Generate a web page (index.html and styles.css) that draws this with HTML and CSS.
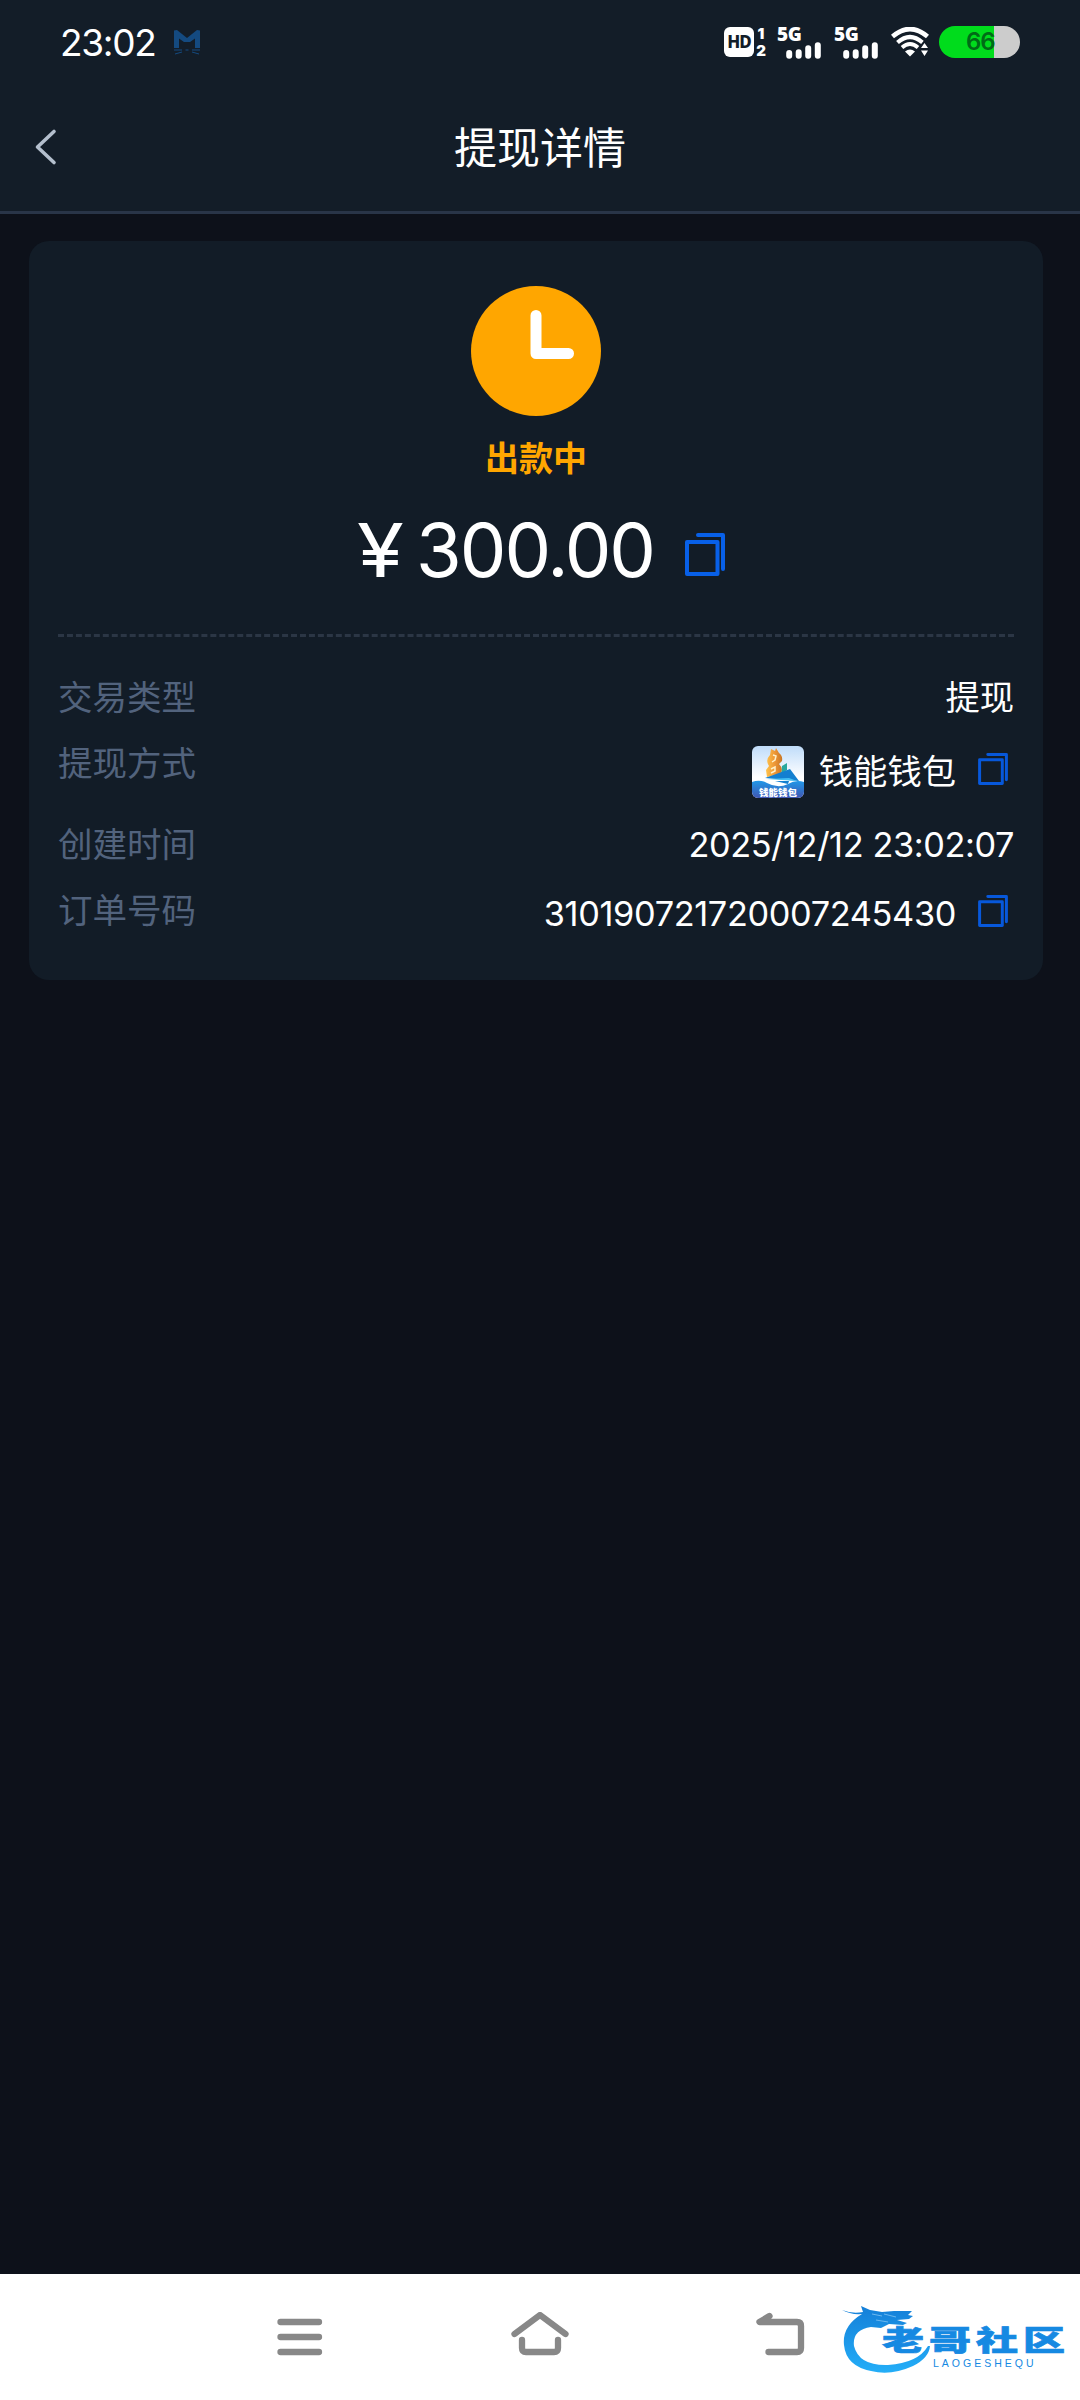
FILE: index.html
```html
<!DOCTYPE html>
<html lang="zh-CN">
<head>
<meta charset="utf-8">
<title>提现详情</title>
<link rel="stylesheet" href="styles.css">
</head>
<body>
<svg width="0" height="0" class="defs">
  <symbol id="copy" viewBox="0 0 40 43">
    <path d="M2 9h30.500v32H2zM13 2h25v34" fill="none" stroke="currentColor" stroke-width="4" stroke-linecap="round" stroke-linejoin="round"/>
  </symbol>
  <symbol id="bars" viewBox="0 0 36 17">
    <path d="M3.200 11v2.800M12.700 10.200v3.600M22.200 6.200v7.600M31.800 3.200v10.600" fill="none" stroke="#fff" stroke-width="6" stroke-linecap="round"/>
  </symbol>
</svg>
<header class="top">
  <div class="status">
    <span class="time">23:02</span>
    <svg class="app-mark" viewBox="0 0 28 27" fill="none">
      <path d="M1 19V1.500L4 1l10 8L24 1l3 .500V19h-5V9.500L17 13h-6L6 9.500V19z" fill="#144a80"/>
      <path d="M1 21h8M2 25l7-2M19 21h8M19 23l7 2M12.500 21h3" stroke="#144a80" stroke-width="1"/>
    </svg>
    <div class="system">
      <span class="hd">HD</span>
      <span class="sims"><b>1</b><b>2</b></span>
      <span class="signal"><b>5G</b><svg viewBox="0 0 36 17"><use href="#bars"/></svg></span>
      <span class="signal"><b>5G</b><svg viewBox="0 0 36 17"><use href="#bars"/></svg></span>
      <svg class="wifi" viewBox="0 0 38 30" fill="none">
        <path d="M1.500 9.500Q19-5.500 36.500 9.500" stroke="#fff" stroke-width="4.600"/>
        <path d="M6.500 15.500Q19 4.500 31.500 15.500" stroke="#fff" stroke-width="4.200"/>
        <path d="M11 20.500Q19 13.500 27 20.500" stroke="#fff" stroke-width="3.800"/>
        <path d="M14 24.500Q19 20.500 24 24.500L19 29.500z" fill="#fff"/>
        <path d="M33.500 13l5.500 8.500-5.500 8.500-6-8.500z" fill="#131d28"/>
        <path d="M33.500 16l3.500 5h-7zM33.500 29l3.500-5.500h-7z" fill="#fff"/>
      </svg>
      <span class="battery">66</span>
    </div>
  </div>
  <div class="titlebar">
    <svg class="back" viewBox="0 0 24 38"><path d="M20 3.500 3.500 19 20 34.500" fill="none" stroke="#b4bfcd" stroke-width="3.600" stroke-linecap="round" stroke-linejoin="round"/></svg>
    <h1>提现详情</h1>
  </div>
</header>
<main>
  <section class="card">
    <svg class="clock" viewBox="0 0 130 130"><circle cx="65" cy="65" r="65" fill="#ffa600"/><path d="M65 29.500V67.500H97.500" fill="none" stroke="#fff" stroke-width="11" stroke-linecap="round" stroke-linejoin="round"/></svg>
    <p class="state">出款中</p>
    <div class="amount"><span class="yen">¥</span><span class="sum">300.00</span><svg class="copy-large"><use href="#copy"/></svg></div>
    <dl class="details">
      <div class="row"><dt>交易类型</dt><dd>提现</dd></div>
      <div class="row method"><dt>提现方式</dt><dd>
        <svg class="wallet" viewBox="0 0 52 52">
          <defs><linearGradient id="sky" x2="0" y2="1"><stop stop-color="#bfdcfa"/><stop offset=".6" stop-color="#fff"/></linearGradient>
          <linearGradient id="sea" x2="0" y2="1"><stop stop-color="#2198e8"/><stop offset="1" stop-color="#4057b3"/></linearGradient>
          <linearGradient id="gold"><stop stop-color="#ffc34b"/><stop offset=".55" stop-color="#ed9636"/><stop offset="1" stop-color="#c87625"/></linearGradient>
          <clipPath id="tile"><rect width="52" height="52" rx="6"/></clipPath></defs>
          <g clip-path="url(#tile)">
            <rect width="52" height="52" fill="url(#sky)"/>
            <path d="M30 20l5-3v7l-6 4z" fill="#28a89e"/>
            <path d="M19 3l4 2 1-3 3 5q4 3 3 8l-3 3q5 5 1 10L15 31l-1-7 3-4q-4-6 1-11z" fill="url(#gold)"/>
            <path d="M21 9l3 1-1 4-3 2M19 23l4-2v4l-4 2" fill="none" stroke="#fff0c8" stroke-width="1.500"/>
            <path d="M13 32 38 23l9 12z" fill="#137fd0"/><path d="M15 33l22-1 8 3z" fill="#43bff2"/>
            <path d="M0 36q8-3 15 1 11 6 21 1 8-5 16-2v16H0z" fill="url(#sea)"/>
            <path d="M23 35h14l-1 3z" fill="#137fd0"/>
            <text x="26" y="49.500" text-anchor="middle" class="wallet-name">钱能钱包</text>
          </g>
        </svg>
        <span>钱能钱包</span><svg class="copy"><use href="#copy"/></svg></dd></div>
      <div class="row"><dt>创建时间</dt><dd class="date">2025/12/12 23:02:07</dd></div>
      <div class="row order"><dt>订单号码</dt><dd><span class="number">310190721720007245430</span><svg class="copy"><use href="#copy"/></svg></dd></div>
    </dl>
  </section>
</main>
<footer class="nav">
  <svg viewBox="0 0 60 50"><path d="M10.500 10h38.500M10.500 25h38.500M10.500 40h38.500"/></svg>
  <svg viewBox="0 0 60 50"><path d="M4.500 22 30 3l25.500 19M12 28v8q0 4 4 4h28q4 0 4-4v-8"/></svg>
  <svg viewBox="0 0 60 50"><path d="M19.500 4 9.500 10H47q4 0 4 4v22q0 4-4 4H18.500"/></svg>
  <div class="brand">
    <svg viewBox="0 0 90 78">
      <defs><linearGradient id="blue" x2="0" y2="1"><stop stop-color="#147fd8"/><stop offset="1" stop-color="#24aef8"/></linearGradient></defs>
      <path d="M0 14q10 4 21 2l-2-6 9 4 12 2 12-1 18 0-4 4 5 1-4 3-12 1 10 3-4 2-14-1-8 4-10-1Q10 34 12 50q5 20 34 19 30-2 40-19l2 0q-1 12-17 20-22 10-42 5Q4 70 2 49 0 30 20 18 9 19 0 14z" fill="url(#blue)"/>
      <path d="M30 18l10 2M42 18l12 3M34 24l12 2" stroke="#6bb8ef" stroke-width="1"/>
    </svg>
    <div class="brand-text">
      <span class="brand-name"><i>老</i><i>哥</i><i>社</i><i>区</i></span>
      <span class="brand-latin">LAOGESHEQU</span>
    </div>
  </div>
</footer>
</body>
</html>
```
FILE: styles.css
```css
* { box-sizing: border-box; margin: 0; padding: 0; }
body { width: 1080px; height: 2400px; display: flex; flex-direction: column; background: #0d111a; color: #fff; font-family: Inter, "Noto Sans CJK SC", sans-serif; overflow: hidden; }
svg { display: block; flex: none; }
.defs { position: absolute; }
.top { height: 214px; flex: none; background: #131d28; border-bottom: 3px solid #293548; }
.status { height: 84px; display: flex; align-items: center; padding: 0 60px; }
.time { width: 113px; font-size: 37px; letter-spacing: -1.3px; }
.app-mark { width: 28px; height: 27px; }
.system { display: flex; align-items: center; margin-left: auto; height: 32px; }
.hd { width: 30px; height: 30px; border-radius: 6px; background: #fff; color: #131d28; font: 800 17px/30px "Noto Sans", sans-serif; text-align: center; letter-spacing: -1px; }
.sims { width: 14px; height: 32px; margin-right: 9px; display: flex; flex-direction: column; align-items: center; justify-content: space-between; font: 700 15px/15px Inter, sans-serif; }
.signal { width: 45px; height: 31px; margin-right: 12px; display: flex; flex-direction: column; font: 700 19px/15px "Noto Sans", sans-serif; }
.signal b { letter-spacing: -.5px; }
.signal svg { width: 36px; height: 17px; margin-left: 9px; }
.wifi { width: 38px; height: 30px; margin-right: 10px; }
.battery { width: 81px; height: 32px; border-radius: 16px; background: linear-gradient(90deg, #00dc1c 55px, #ccc 55px); color: #006b16; font: 600 24px/32px Inter, sans-serif; padding-left: 27px; letter-spacing: -1px; }
.titlebar { height: 127px; position: relative; display: flex; justify-content: center; align-items: center; }
.back { position: absolute; left: 34px; top: 44px; width: 24px; height: 38px; }
h1 { font-size: 43px; font-weight: 400; line-height: 60px; }
main { flex: 1; padding: 27px 37px 0 29px; }
.card { height: 739px; border-radius: 20px; background: #121c27; padding: 45px 29px 0; display: flex; flex-direction: column; align-items: center; }
.clock { width: 130px; height: 130px; }
.state { margin-top: 23px; font-size: 34px; line-height: 40px; font-weight: 700; color: #ffa600; }
.amount { align-self: stretch; height: 158px; padding: 0 0 14px 299px; display: flex; align-items: center; border-bottom: 3px dashed #2b3645; }
.yen { width: 59px; font-size: 74px; line-height: 90px; transform: scaleX(1.15); transform-origin: left; }
.sum { width: 269px; font-size: 74px; line-height: 90px; letter-spacing: -2px; }
.copy-large { width: 40px; height: 43px; color: #0860e8; margin-top: 9px; }
.details { align-self: stretch; padding-top: 38px; font-size: 34.500px; line-height: 46px; }
.row { display: flex; justify-content: space-between; height: 66px; }
.method { height: 81px; }
dt { color: #52637d; }
dd { display: flex; justify-content: flex-end; font-size: 34.300px; }
.date { letter-spacing: -.4px; }
.number { letter-spacing: -.35px; }
.method dd { height: 62px; align-items: center; }
.wallet { width: 52px; height: 52px; margin-right: 15px; }
.wallet-name { font: 900 9.500px "Noto Sans CJK SC", sans-serif; fill: #fff; }
.copy { width: 30px; height: 32px; margin: 0 6px 0 22px; color: #0758db; }
.method .copy { margin-top: -6px; }
.order dd { align-items: center; height: 52px; }
.order .copy { margin-top: -6px; }
.nav { height: 126px; flex: none; background: #fff; display: flex; position: relative; padding: 38px 0 0 270px; gap: 180px; }
.nav > svg { width: 60px; height: 50px; fill: none; stroke: #888; stroke-width: 6.300; stroke-linecap: round; stroke-linejoin: round; }
.brand { position: absolute; left: 842px; top: 22px; width: 222px; height: 80px; color: #1689e2; }
.brand svg { width: 90px; height: 78px; }
.brand-text { position: absolute; left: 40px; top: 27px; width: 182px; display: flex; flex-direction: column; }
.brand-name { display: flex; gap: 5px; height: 31px; font: 900 42px/31px "Noto Sans CJK SC", sans-serif; transform: scaleY(.68); -webkit-text-stroke: 1px #1689e2; }
.brand-name i { font-style: normal; }
.brand-latin { margin: 4px 0 0 51px; font: 400 10.500px/11px "Liberation Sans", sans-serif; letter-spacing: 3px; }
```
